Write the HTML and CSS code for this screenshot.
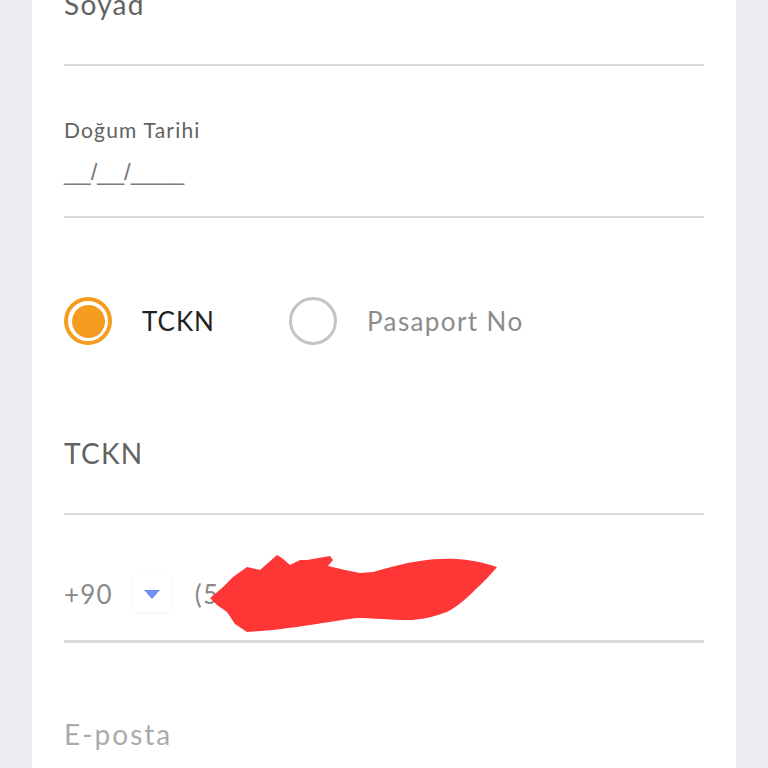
FILE: index.html
```html
<!DOCTYPE html>
<html lang="tr">
<head>
<meta charset="utf-8">
<title>Form</title>
<link rel="stylesheet" href="styles.css">
</head>
<body>
<div class="page">
  <div class="card">
    <div class="field field-first">
      <div class="value">Soyad</div>
    </div>
    <div class="field field-date">
      <div class="label">Doğum Tarihi</div>
      <div class="date">__/__/____</div>
    </div>
    <div class="radio-row">
      <div class="radio-item">
        <span class="radio radio-on"><span class="dot"></span></span>
        <span class="radio-label active">TCKN</span>
      </div>
      <div class="radio-item">
        <span class="radio"></span>
        <span class="radio-label">Pasaport No</span>
      </div>
    </div>
    <div class="field field-id">
      <div class="value">TCKN</div>
    </div>
    <div class="field phone">
      <span class="code">+90</span>
      <span class="dropdown"><svg width="16" height="9" viewBox="0 0 16 9"><path d="M0 0 H16 L8 9 Z" fill="#6f8ef5"/></svg></span>
      <span class="number">(5</span>
      <svg class="redact" width="440" height="130" viewBox="64 515 440 130"><path d="M210 598 L222 588 L233 577 L247 567 L260 570 L277 555 L282 558 L290 565 L300 560 L307 560 L330 556 L333 560 L328 566 L345 570 L360 573 L373 572 C390 567 405 563 420 561 C445 557 470 558 497 567 C488 578 480 585 473 592 C465 600 455 608 447 612 C430 618 420 620 407 620 C390 620 372 618 357 618 C345 619 338 621 330 622 C310 625 290 628 273 630 L247 632 L235 624 L227 612 L217 605 Z" fill="#ff3636"/></svg>
    </div>
    <div class="field field-last">
      <div class="value placeholder">E-posta</div>
    </div>
  </div>
</div>
</body>
</html>
```

FILE: styles.css
```css
html, body {
  margin: 0;
  padding: 0;
  background: #eceef3;
  height: 768px;
  overflow: hidden;
}
body {
  font-family: "Lato", "Open Sans", sans-serif;
}
.page {
  padding: 0 32px;
}
.card {
  background: #ffffff;
  margin-top: -14px;
  padding: 0 32px;
  height: 800px;
}
.field {
  border-bottom: 2px solid #d9d9d9;
}
.value {
  font-size: 28px;
  line-height: 36px;
  color: #626262;
  letter-spacing: 1.3px;
}
.field-first {
  padding-bottom: 42px;
}
.field-date {
  padding-top: 51px;
  padding-bottom: 28px;
}
.label {
  font-size: 21px;
  line-height: 25px;
  color: #626262;
  letter-spacing: 1.2px;
}
.date {
  margin-top: 14px;
  font-family: "Liberation Sans", Arial, sans-serif;
  font-size: 24px;
  line-height: 32px;
  color: #7a7a7a;
}
.radio-row {
  display: flex;
  align-items: center;
  gap: 74px;
  padding-top: 79px;
  padding-bottom: 90px;
}
.radio-item {
  display: flex;
  align-items: center;
  gap: 30px;
}
.radio {
  box-sizing: border-box;
  width: 48px;
  height: 48px;
  border-radius: 50%;
  border: 3px solid #c4c4c4;
  display: flex;
  align-items: center;
  justify-content: center;
}
.radio-on {
  border: 4px solid #f59d1e;
}
.dot {
  width: 33px;
  height: 33px;
  border-radius: 50%;
  background: #f59d1e;
}
.radio-label {
  font-size: 26px;
  line-height: 32px;
  color: #8c8c8c;
  letter-spacing: 1.4px;
}
.radio-label.active {
  color: #222222;
  letter-spacing: 1px;
}
.field-id {
  padding-bottom: 42px;
}
.phone {
  position: relative;
  display: flex;
  align-items: center;
  height: 48px;
  padding-top: 55px;
  padding-bottom: 22px;
  border-bottom: 3px solid #d9d9d9;
}
.code, .number {
  font-size: 26px;
  color: #8a8a8a;
  letter-spacing: 1.2px;
}
.dropdown {
  margin-left: 20px;
  width: 38px;
  height: 36px;
  border-radius: 4px;
  background: #ffffff;
  box-shadow: 0 1px 4px rgba(0, 0, 0, 0.06);
  display: flex;
  align-items: center;
  justify-content: center;
}
.number {
  margin-left: 24px;
}
.redact {
  position: absolute;
  left: 0;
  top: 0;
}
.field-last {
  border-bottom: none;
  padding-top: 73px;
}
.placeholder {
  color: #ababab;
  letter-spacing: 2px;
}
```
